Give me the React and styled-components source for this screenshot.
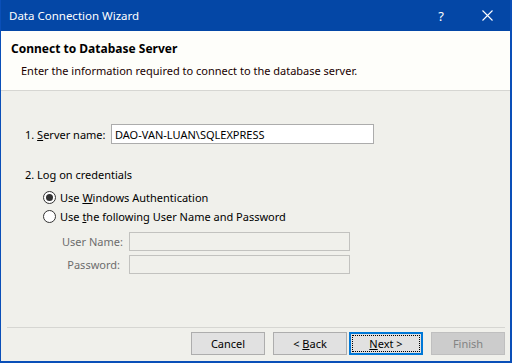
import React from 'react';
import styled, { createGlobalStyle } from 'styled-components';

const GlobalStyle = createGlobalStyle`
  html, body {
    margin: 0;
    padding: 0;
    background: #ffffff;
  }
  body {
    font-family: 'Noto Sans', 'Segoe UI', sans-serif;
    font-size: 11px;
    color: #000000;
  }
`;

const Window = styled.div`
  width: 512px;
  height: 363px;
  box-sizing: border-box;
  display: flex;
  flex-direction: column;
  border-left: 1px solid #0a4fb8;
  border-right: 2px solid #0a4fb8;
  border-bottom: 2px solid #0a4fb8;
  background: #f0f0eb;
  overflow: hidden;
  white-space: nowrap;
`;

const TitleBar = styled.div`
  height: 31px;
  flex-shrink: 0;
  display: flex;
  align-items: center;
  background: #0447a6;
  color: #ffffff;
  padding-left: 8px;
`;

const TitleText = styled.span`
  flex: 1;
  font-size: 11.5px;
`;

const TitleButton = styled.span`
  width: 46px;
  height: 31px;
  display: flex;
  align-items: center;
  justify-content: center;
  font-size: ${p => (p.small ? '13px' : '12px')};
`;

const Header = styled.div`
  flex-shrink: 0;
  box-sizing: border-box;
  height: 60px;
  background: #fefefa;
  border-bottom: 1px solid #d6d6d2;
  padding: 9px 0 0 10px;
`;

const HeaderTitle = styled.div`
  font-weight: bold;
  font-size: 12px;
  line-height: 18px;
`;

const HeaderSubtitle = styled.div`
  margin-top: 5px;
  padding-left: 10px;
  color: #200000;
  line-height: 16px;
`;

const Body = styled.div`
  flex: 1;
  display: flex;
  flex-direction: column;
  padding: 33px 0 0 24px;
`;

const Row = styled.div`
  display: flex;
  align-items: center;
`;

const FieldLabel = styled.label`
  width: 86px;
`;

const TextInput = styled.div`
  box-sizing: border-box;
  width: ${p => p.width}px;
  height: ${p => p.height || 20}px;
  border: 1px solid ${p => (p.disabled ? '#c2c2bf' : '#acacac')};
  background: ${p => (p.disabled ? '#f0f0eb' : '#ffffff')};
  padding-left: 3px;
  display: flex;
  align-items: center;
`;

const SectionLabel = styled.div`
  margin-top: 23px;
  line-height: 16px;
`;

const RadioList = styled.div`
  display: flex;
  flex-direction: column;
  gap: 3px;
  margin-top: 6px;
  padding-left: 18px;
`;

const RadioRow = styled.div`
  display: flex;
  align-items: center;
  gap: 4px;
  height: 16px;
`;

const RadioCircle = styled.span`
  box-sizing: border-box;
  width: 13px;
  height: 13px;
  border-radius: 50%;
  border: 1px solid #333333;
  background: #ffffff;
  display: flex;
  align-items: center;
  justify-content: center;
  &::after {
    content: '';
    display: ${p => (p.checked ? 'block' : 'none')};
    width: 7px;
    height: 7px;
    border-radius: 50%;
    background: #333333;
  }
`;

const CredentialGrid = styled.div`
  display: grid;
  grid-template-columns: 58px 221px;
  column-gap: 9px;
  row-gap: 4px;
  margin-top: 8px;
  padding-left: 37px;
  align-items: center;
`;

const DisabledLabel = styled.span`
  color: #6d6d6d;
  text-align: right;
`;

const Footer = styled.div`
  flex-shrink: 0;
  margin: 0 5px 0 6px;
  border-top: 1px solid #d6d6d2;
  padding: 4px 0 6px 0;
  display: flex;
  justify-content: flex-end;
  gap: 8px;
`;

const Button = styled.button`
  box-sizing: border-box;
  width: 74px;
  height: 23px;
  font-family: inherit;
  font-size: 11px;
  padding: 0;
  margin: 0;
  background: ${p => (p.disabled ? '#cccccc' : '#e1e1e1')};
  color: ${p => (p.disabled ? '#838383' : '#000000')};
  border: ${p => (p.focused ? '2px solid #0078d7' : p.disabled ? '1px solid #bfbfbf' : '1px solid #adadad')};
  margin-left: ${p => (p.tight ? '-6px' : '0')};
  position: relative;
  &::after {
    content: '';
    display: ${p => (p.focused ? 'block' : 'none')};
    position: absolute;
    inset: 1px;
    border: 1px dotted #000000;
  }
`;

const Key = styled.span`
  text-decoration: underline;
`;

export default function App() {
  return (
    <>
      <GlobalStyle />
      <Window>
        <TitleBar>
          <TitleText>Data Connection Wizard</TitleText>
          <TitleButton small>?</TitleButton>
          <TitleButton>
            <svg width="11" height="11" viewBox="0 0 11 11">
              <path d="M0.5 0.5 L10.5 10.5 M10.5 0.5 L0.5 10.5" stroke="#ffffff" strokeWidth="1.1" fill="none" />
            </svg>
          </TitleButton>
        </TitleBar>
        <Header>
          <HeaderTitle>Connect to Database Server</HeaderTitle>
          <HeaderSubtitle>Enter the information required to connect to the database server.</HeaderSubtitle>
        </Header>
        <Body>
          <Row>
            <FieldLabel>
              1. <Key>S</Key>erver name:
            </FieldLabel>
            <TextInput width={263}>DAO-VAN-LUAN\SQLEXPRESS</TextInput>
          </Row>
          <SectionLabel>2. Log on credentials</SectionLabel>
          <RadioList>
            <RadioRow>
              <RadioCircle checked />
              <span>
                Use <Key>W</Key>indows Authentication
              </span>
            </RadioRow>
            <RadioRow>
              <RadioCircle />
              <span>
                Use <Key>t</Key>he following User Name and Password
              </span>
            </RadioRow>
          </RadioList>
          <CredentialGrid>
            <DisabledLabel>User Name:</DisabledLabel>
            <TextInput width={221} height={19} disabled />
            <DisabledLabel>Password:</DisabledLabel>
            <TextInput width={221} height={19} disabled />
          </CredentialGrid>
        </Body>
        <Footer>
          <Button>Cancel</Button>
          <Button>
            &lt; <Key>B</Key>ack
          </Button>
          <Button focused tight>
            <Key>N</Key>ext &gt;
          </Button>
          <Button disabled>Finish</Button>
        </Footer>
      </Window>
    </>
  );
}
